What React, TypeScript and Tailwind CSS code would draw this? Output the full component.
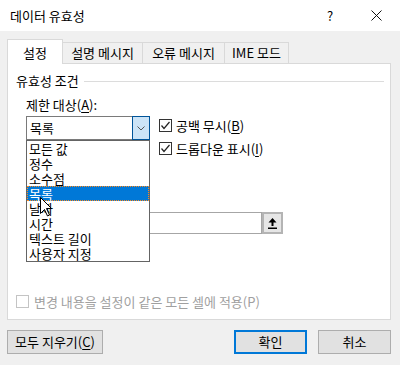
import React from 'react'

const font = "font-['Noto_Sans_CJK_KR',sans-serif]"

function Check({ checked, disabled }: { checked?: boolean; disabled?: boolean }) {
  return (
    <div
      className={`w-[13px] h-[13px] shrink-0 border bg-white flex items-center justify-center ${
        disabled ? 'border-[#c4c4c4]' : 'border-[#333333]'
      }`}
    >
      {checked && (
        <svg width="11" height="11" viewBox="0 0 11 11">
          <polyline points="1.5,5.5 4,8.5 9.5,2" fill="none" stroke="#222" strokeWidth="1.2" />
        </svg>
      )}
    </div>
  )
}

function U({ children }: { children: React.ReactNode }) {
  return <span className="underline underline-offset-2">{children}</span>
}

export default function App() {
  const items = ['모든 값', '정수', '소수점', '목록', '날짜', '시간', '텍스트 길이', '사용자 지정']

  return (
    <div className={`w-[400px] h-[365px] bg-[#f0f0f0] text-[13px] text-black leading-[16px] ${font} overflow-hidden`}>
      {/* Title bar */}
      <div className="h-[31px] bg-white flex items-center">
        <span className="pl-[10px]">데이터 유효성</span>
        <div className="ml-auto mr-px flex h-full">
          <div className="w-[46px] h-full flex items-center justify-center text-[13px]">?</div>
          <div className="w-[46px] h-full flex items-center justify-center">
            <svg width="11" height="11" viewBox="0 0 11 11">
              <path d="M0.5 0.5 L10.5 10.5 M10.5 0.5 L0.5 10.5" stroke="#111" strokeWidth="1" />
            </svg>
          </div>
        </div>
      </div>

      <div className="px-[7px] pt-[8px]">
        {/* Tabs */}
        <div className="flex items-end h-[25px] relative z-10 -mb-px">
          <div className="w-[56px] h-[25px] bg-white border border-b-0 border-[#d9d9d9] flex items-center justify-center pt-[1px]">
            설정
          </div>
          <div className="-ml-px w-[81px] h-[22px] border border-[#d9d9d9] bg-[#f0f0f0] flex items-center justify-center">
            설명 메시지
          </div>
          <div className="-ml-px w-[83px] h-[22px] border border-[#d9d9d9] bg-[#f0f0f0] flex items-center justify-center">
            오류 메시지
          </div>
          <div className="-ml-px w-[65px] h-[22px] border border-[#d9d9d9] bg-[#f0f0f0] flex items-center justify-center">
            IME 모드
          </div>
        </div>

        {/* Panel */}
        <div className="relative w-[384px] h-[257px] bg-white border border-[#d9d9d9] pt-[9px]">
          <div className="flex items-center h-[16px] pl-[8px] pr-[6px]">
            <span>유효성 조건</span>
            <div className="flex-1 h-px bg-[#dcdcdc] ml-[5px]" />
          </div>

          <div className="pl-[18px] mt-[8px]">
            제한 대상(<U>A</U>):
          </div>

          <div className="flex items-start pl-[18px] mt-[3px]">
            <div className="w-[124px] h-[24px] border border-[#7a7a7a] flex">
              <div className="flex-1 pl-[3px] leading-[22px]">목록</div>
              <div className="w-[18px] h-[24px] -my-px -mr-px border border-[#005499] bg-[#cce4f7] flex items-center justify-center">
                <svg width="8" height="5" viewBox="0 0 8 5">
                  <polyline points="0.5,0.5 4,4 7.5,0.5" fill="none" stroke="#555" strokeWidth="1" />
                </svg>
              </div>
            </div>
            <div className="ml-[9px] mt-[3px] flex flex-col gap-[10px]">
              <div className="flex items-center gap-[4px] h-[13px]">
                <Check checked />
                <span>공백 무시(<U>B</U>)</span>
              </div>
              <div className="flex items-center gap-[4px] h-[13px]">
                <Check checked />
                <span>드롭다운 표시(<U>I</U>)</span>
              </div>
            </div>
          </div>

          {/* Source field (mostly behind the list) */}
          <div className="flex pl-[18px] mt-[57px]">
            <div className="w-[236px] h-[22px] border border-[#a6a6a6] bg-white" />
            <div className="w-[21px] h-[22px] border-2 border-[#b4b4b4] bg-[#e6e6e6] flex items-center justify-center">
              <svg width="9" height="11" viewBox="0 0 9 11">
                <path d="M4.5 0 L8.5 4.5 L5.5 4.5 L5.5 8 L3.5 8 L3.5 4.5 L0.5 4.5 Z" fill="#000" />
                <rect x="0" y="9.5" width="9" height="1.5" fill="#000" />
              </svg>
            </div>
          </div>

          <div className="flex items-center gap-[5px] pl-[8px] mt-[61px] h-[13px] text-[#a0a0a0]">
            <Check disabled />
            <span>변경 내용을 설정이 같은 모든 셀에 적용(P)</span>
          </div>

          {/* Open dropdown list */}
          <div className="absolute left-[18px] top-[76px] w-[124px] h-[122px] border border-[#646464] bg-white">
            {items.map((item, i) => (
              <div
                key={item}
                className={`h-[15px] leading-[13px] pl-[1px] border ${
                  i === 3
                    ? 'bg-[#0078d7] text-white border-dotted border-[#ff8a1c]'
                    : 'border-transparent'
                }`}
              >
                {item}
              </div>
            ))}
          </div>

          {/* Mouse cursor */}
          <svg className="absolute left-[32px] top-[133px]" width="13" height="20" viewBox="0 0 13 20">
            <path
              d="M0.5 0.5 L0.5 16.5 L4.5 12.5 L7.5 19 L9.5 18 L6.5 11.5 L11.5 11.5 Z"
              fill="#fff"
              stroke="#000"
              strokeWidth="1"
            />
          </svg>
        </div>

        {/* Bottom buttons */}
        <div className="flex mt-[10px]">
          <div className="w-[96px] h-[24px] border border-[#adadad] bg-[#e1e1e1] flex items-center justify-center">
            모두 지우기(<U>C</U>)
          </div>
          <div className="ml-auto w-[73px] h-[24px] border-2 border-[#0078d7] bg-[#e1e1e1] flex items-center justify-center">
            확인
          </div>
          <div className="ml-[11px] mr-[2px] w-[73px] h-[24px] border border-[#adadad] bg-[#e1e1e1] flex items-center justify-center">
            취소
          </div>
        </div>
      </div>
    </div>
  )
}
